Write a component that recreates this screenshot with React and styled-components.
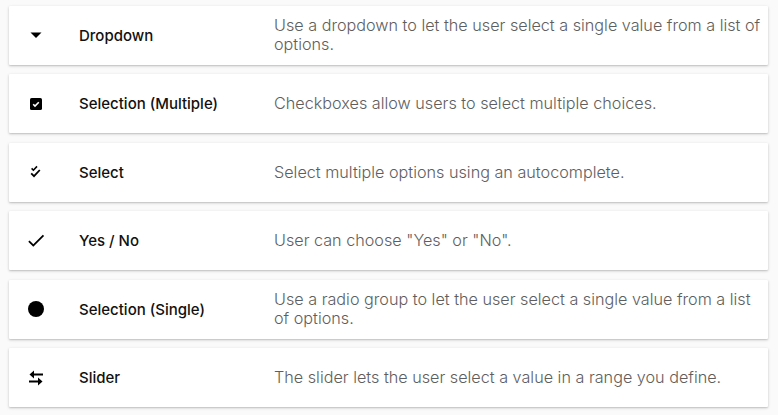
import React from "react";
import styled, { createGlobalStyle } from "styled-components";

const Global = createGlobalStyle`
  html, body { margin: 0; padding: 0; background: #fafafa; }
  body { font-family: Inter, "Noto Sans", sans-serif; }
`;

const List = styled.div`
  display: flex;
  flex-direction: column;
  gap: 9.5px;
  padding: 5.5px 10px 8px 9px;
`;

const Card = styled.div`
  display: grid;
  grid-template-columns: 70px 195px 1fr;
  align-items: center;
  height: 59px;
  box-sizing: border-box;
  background: #fff;
  box-shadow: 0 1px 3px rgba(0, 0, 0, 0.22), 0 1px 1px rgba(0, 0, 0, 0.06);
  border-radius: 1px;
  padding-right: 4px;
`;

const IconCell = styled.div`
  display: flex;
  align-items: center;
  justify-content: center;
  width: 54px;
  color: #000;
`;

const Label = styled.div`
  font-size: 15px;
  font-weight: 500;
  color: #111;
`;

const Desc = styled.div`
  font-size: 16.2px;
  font-weight: 300;
  line-height: 19px;
  color: #5e5e5e;
`;

const Svg = ({ children, size = 24 }) => (
  <svg width={size} height={size} viewBox="0 0 24 24" fill="currentColor">
    {children}
  </svg>
);

const icons = {
  dropdown: (
    <Svg>
      <path d="M6.5 9.5l5.5 5.5 5.5-5.5z" />
    </Svg>
  ),
  checkbox: (
    <Svg>
      <rect x="6" y="6" width="12" height="12" rx="1.6" />
      <path d="M9.2 12.2l1.8 1.8 3.8-3.8" fill="none" stroke="#fff" strokeWidth="1.6" />
    </Svg>
  ),
  multi: (
    <Svg>
      <path d="M7.6 8.4l1.8 1.8 3.6-3.8" fill="none" stroke="currentColor" strokeWidth="1.6" />
      <path d="M7.2 13.4l2.8 2.8 5.8-6.2" fill="none" stroke="currentColor" strokeWidth="1.8" />
    </Svg>
  ),
  check: (
    <Svg>
      <path d="M9 16.17L4.83 12l-1.42 1.41L9 19 21 7l-1.41-1.41z" transform="translate(1.2 0.6) scale(0.9)" />
    </Svg>
  ),
  radio: (
    <Svg>
      <circle cx="12" cy="12" r="8" />
    </Svg>
  ),
  swap: (
    <Svg>
      <path d="M10 4.5L5.5 8.5l4.5 4v-3h9V7.5h-9z" />
      <path d="M14 11.5l4.5 4-4.5 4v-3H5v-2h9z" />
    </Svg>
  ),
};

const rows = [
  { icon: "dropdown", label: "Dropdown", desc: "Use a dropdown to let the user select a single value from a list of options." },
  { icon: "checkbox", label: "Selection (Multiple)", desc: "Checkboxes allow users to select multiple choices." },
  { icon: "multi", label: "Select", desc: "Select multiple options using an autocomplete." },
  { icon: "check", label: "Yes / No", desc: 'User can choose "Yes" or "No".' },
  { icon: "radio", label: "Selection (Single)", desc: "Use a radio group to let the user select a single value from a list of options." },
  { icon: "swap", label: "Slider", desc: "The slider lets the user select a value in a range you define." },
];

export default function App() {
  return (
    <>
      <Global />
      <List>
        {rows.map((r) => (
          <Card key={r.label}>
            <IconCell>{icons[r.icon]}</IconCell>
            <Label>{r.label}</Label>
            <Desc>{r.desc}</Desc>
          </Card>
        ))}
      </List>
    </>
  );
}
